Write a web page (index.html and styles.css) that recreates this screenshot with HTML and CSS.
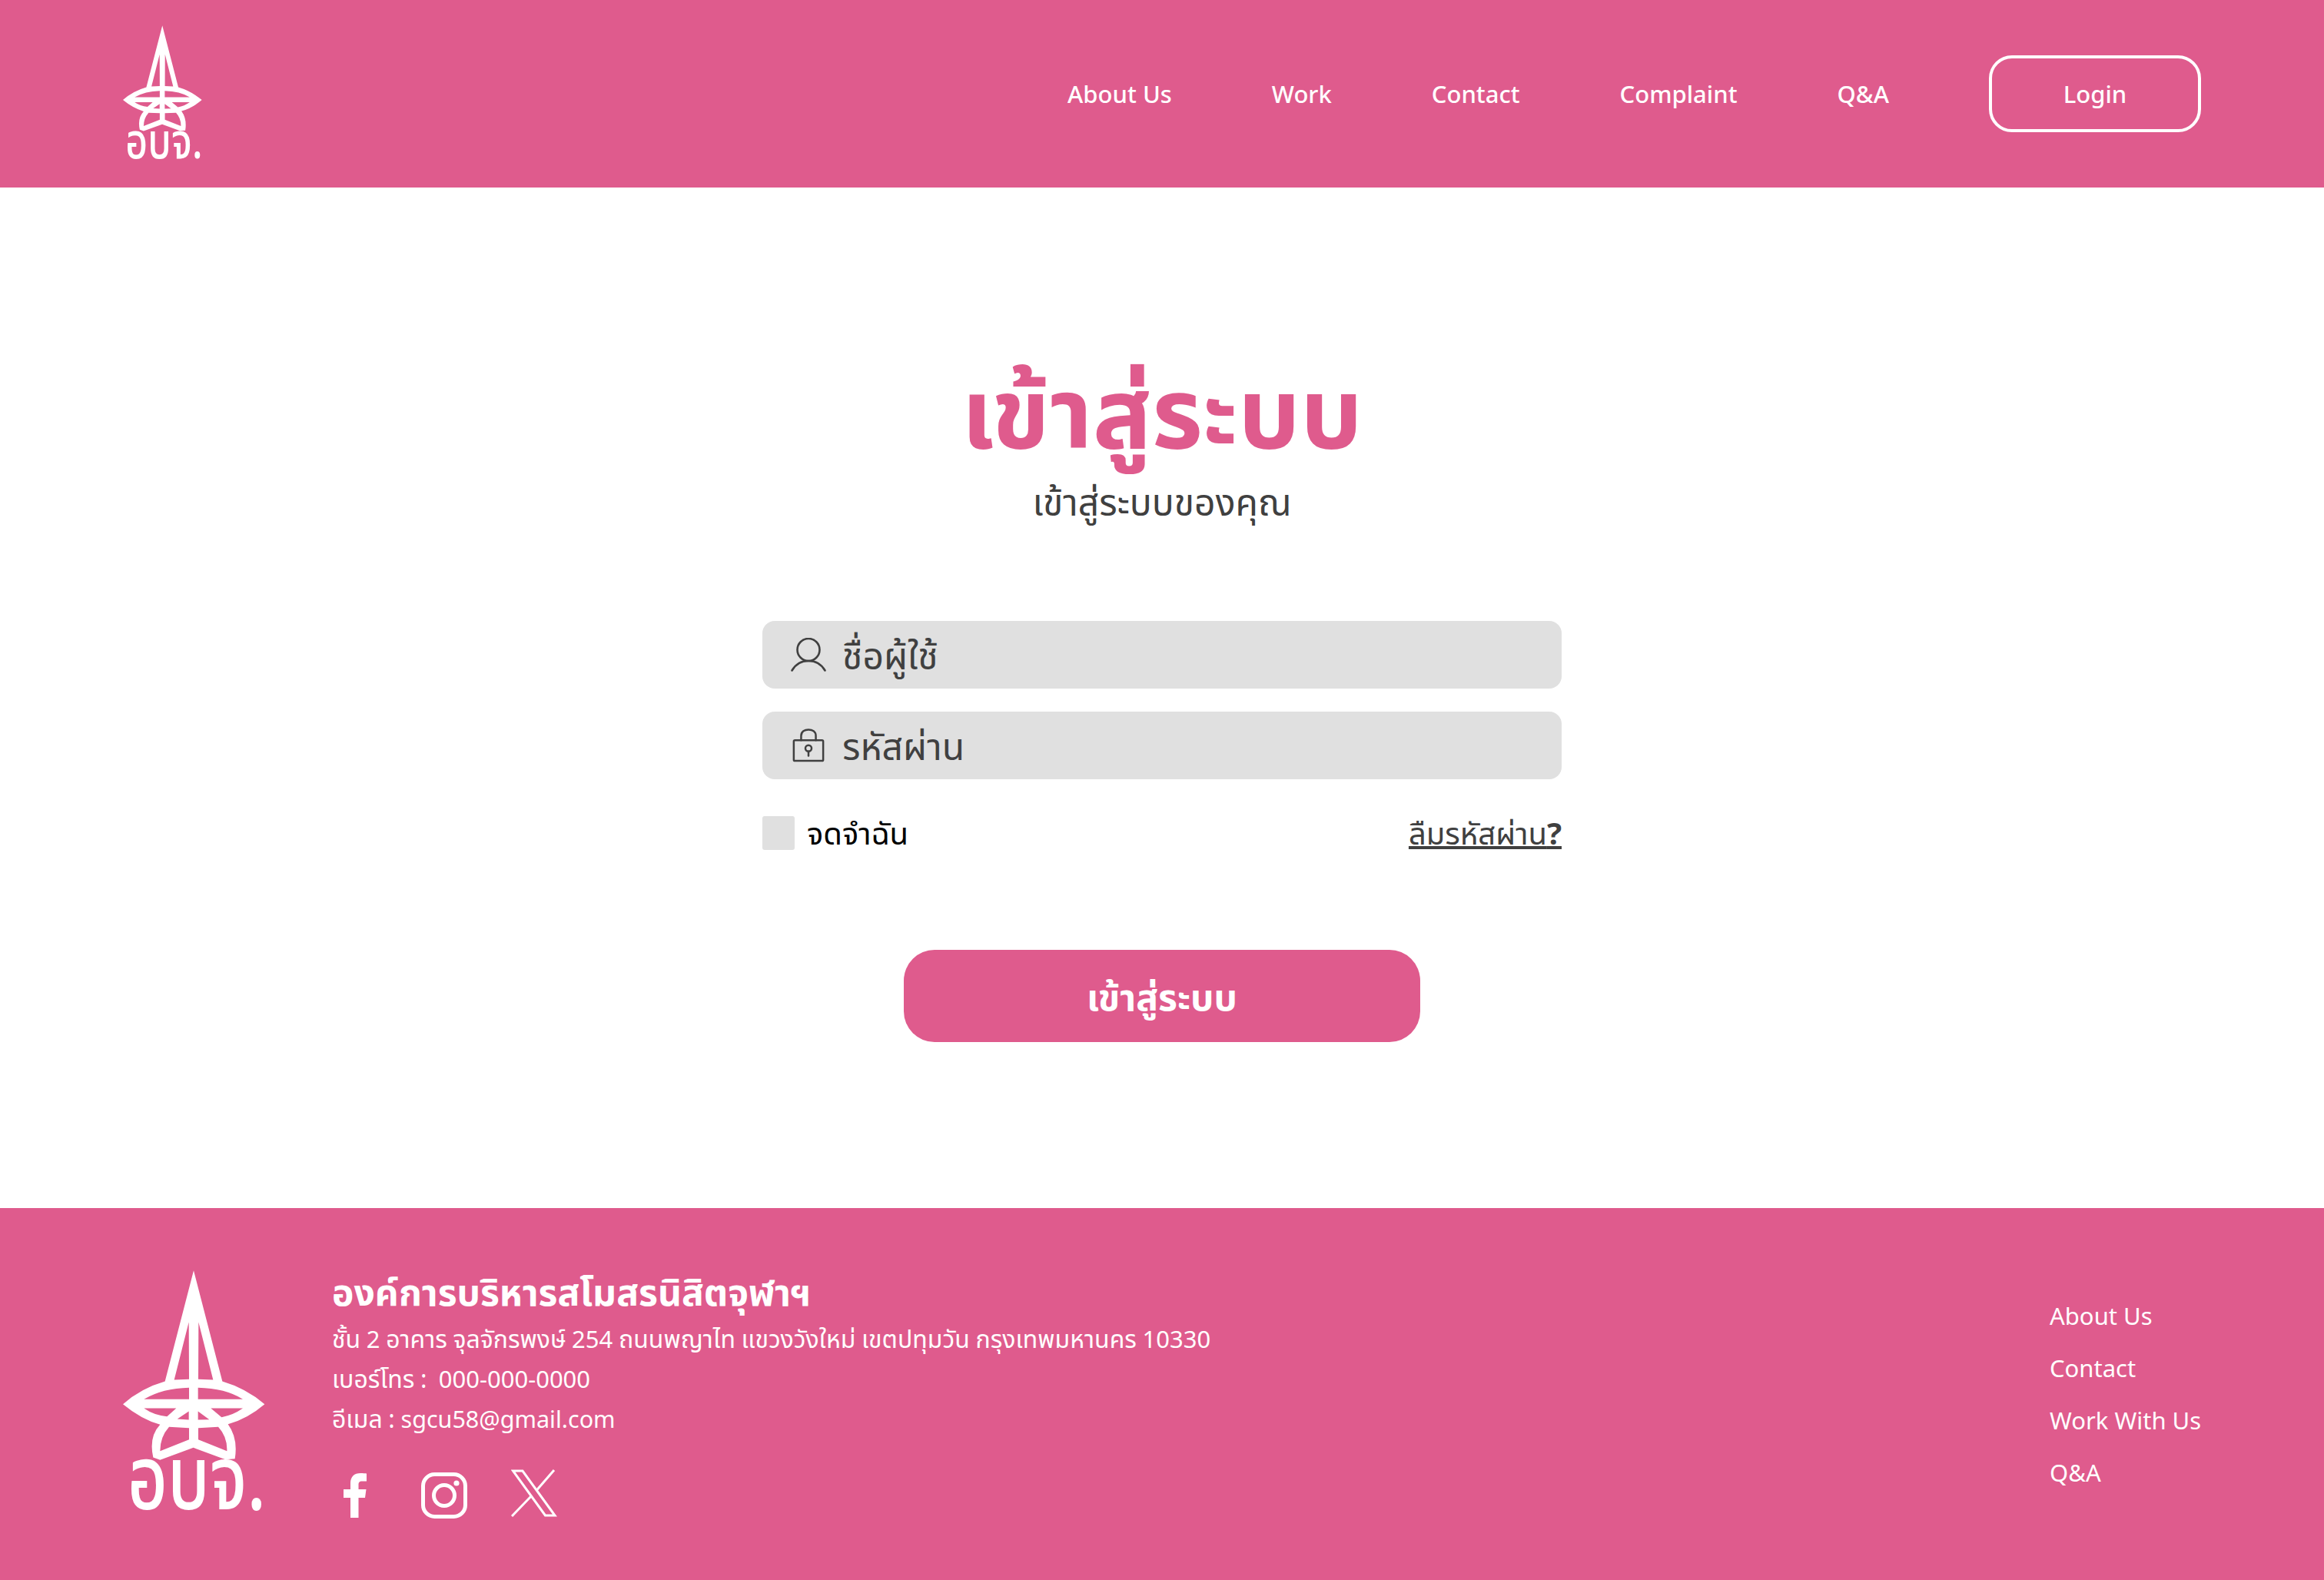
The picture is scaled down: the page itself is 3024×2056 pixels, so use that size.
FILE: index.html
```html
<!DOCTYPE html>
<html lang="th">
<head>
    <meta charset="UTF-8">
    <meta name="viewport" content="width=device-width, initial-scale=1.0">
    <title>เข้าสู่ระบบ</title>
    <link rel="stylesheet" href="styles.css">
</head>
<body>
    <svg class="defs" width="0" height="0">
        <defs>
            <path id="logoMark" fill="#fff" fill-rule="evenodd" d="M336 70 L448 503 Q540 530 613 592 Q545 650 470 670 Q510 725 497 805 L460 808 L335 762 L205 810 L178 800 Q160 720 205 672 Q130 650 60 592 Q130 530 224 503 Z M317 272 L318 495 L260 497 Z M355 272 L412 497 L354 495 Z M142 573 Q215 530 318 528 L318 573 Z M353 528 Q460 530 528 573 L353 573 Z M142 608 L268 608 L232 640 Q180 635 142 608 Z M528 608 Q490 635 445 643 L403 608 Z M317 620 L317 653 L272 650 Z M353 620 L397 652 L353 653 Z M240 681 L318 685 L318 730 L205 775 Q205 720 240 681 Z M432 681 L354 685 L354 730 L466 775 Q468 720 432 681 Z"/>
        </defs>
    </svg>

    <!-- Header -->
    <header class="topbar">
        <svg class="logo-small" viewBox="60 70 555 935">
            <use href="#logoMark"/>
            <text class="logo-text" x="78" y="1003" textLength="540" lengthAdjust="spacingAndGlyphs">อบจ.</text>
        </svg>
        <nav class="topnav">
            <a href="#">About Us</a>
            <a href="#">Work</a>
            <a href="#">Contact</a>
            <a href="#">Complaint</a>
            <a href="#">Q&amp;A</a>
            <a href="#" class="login-btn">Login</a>
        </nav>
    </header>

    <!-- Login form -->
    <main class="login">
        <h1>เข้าสู่ระบบ</h1>
        <p class="subtitle">เข้าสู่ระบบของคุณ</p>
        <form class="login-form">
            <label class="field">
                <svg class="field-icon" viewBox="0 0 46 44" fill="none" stroke="#404040" stroke-width="2.6" stroke-linecap="round"><circle cx="23" cy="15.500" r="14.500"/><path d="M1.500 42.500 C7 33 14 30 23 30 C32 30 39 33 44.500 42.500"/></svg>
                <input type="text" placeholder="ชื่อผู้ใช้">
            </label>
            <label class="field">
                <svg class="field-icon" viewBox="0 0 46 46" fill="none" stroke="#404040" stroke-width="2.6" stroke-linecap="round"><rect x="3" y="16" width="40" height="28" rx="1.500"/><path d="M13 16 V10 C13 4 18 1.500 23 1.500 C28 1.500 33 4 33 10 V16"/><circle cx="23" cy="27" r="4.200"/><path d="M23 31 V37"/></svg>
                <input type="password" placeholder="รหัสผ่าน">
            </label>
            <div class="form-row">
                <label class="remember"><span class="checkbox"></span>จดจำฉัน</label>
                <a href="#" class="forgot">ลืมรหัสผ่าน<b>?</b></a>
            </div>
            <button type="submit">เข้าสู่ระบบ</button>
        </form>
    </main>

    <!-- Footer -->
    <footer class="footer">
        <svg class="logo-big" viewBox="60 70 555 935">
            <use href="#logoMark"/>
            <text class="logo-text" x="78" y="1003" textLength="540" lengthAdjust="spacingAndGlyphs">อบจ.</text>
        </svg>
        <div class="footer-info">
            <h2>องค์การบริหารสโมสรนิสิตจุฬาฯ</h2>
            <p>ชั้น <span class="num">2</span> อาคาร จุลจักรพงษ์ <span class="num">254</span> ถนนพญาไท แขวงวังใหม่ เขตปทุมวัน กรุงเทพมหานคร <span class="num">10330</span></p>
            <p>เบอร์โทร :&nbsp; <span class="num">000-000-0000</span></p>
            <p>อีเมล : <span class="mail">sgcu58@gmail.com</span></p>
            <div class="social">
                <svg class="fb" viewBox="0 0 30 58"><path fill="#fff" d="M9 58 V32 H0 V21 H9 V13 C9 4.500 14 0 22 0 C25.500 0 28.500 .3 30 .5 V10.500 H24.500 C20 10.500 19.500 12.500 19.500 15.500 V21 H29.500 L28 32 H19.500 V58 Z"/></svg>
                <svg class="ig" viewBox="0 0 60 60" fill="none" stroke="#fff" stroke-width="5"><rect x="2.500" y="2.500" width="55" height="55" rx="15"/><circle cx="30" cy="30" r="13.500"/><circle cx="46" cy="14" r="3.600" fill="#fff" stroke="none"/></svg>
                <svg class="xicon" viewBox="0 0 60 62" fill="none" stroke="#fff" stroke-width="3"><path d="M2.500 2 H15 L57 60 H44.500 Z"/><path d="M56 1 L33 27.500 M27 34 L1 61"/></svg>
            </div>
        </div>
        <ul class="footer-links">
            <li><a href="#">About Us</a></li>
            <li><a href="#">Contact</a></li>
            <li><a href="#">Work With Us</a></li>
            <li><a href="#">Q&amp;A</a></li>
        </ul>
    </footer>
</body>
</html>
```

FILE: styles.css
```css
* {
    box-sizing: border-box;
}

body {
    font-family: "Noto Sans", "Noto Sans Thai", sans-serif;
    background-color: white;
    color: #404040;
    display: flex;
    flex-direction: column;
    min-height: 100vh;
    margin: 0;
}

a {
    color: inherit;
    text-decoration: none;
}

.defs {
    position: absolute;
}

.logo-text {
    font-family: "Noto Sans", "Noto Sans Thai", sans-serif;
    font-size: 350px;
    font-weight: 500;
    fill: white;
}

/* Header */
.topbar {
    background-color: #df5b8d;
    height: 244px;
    padding: 33px 160px 0;
    display: flex;
    justify-content: space-between;
    align-items: flex-start;
    flex-shrink: 0;
}

.logo-small {
    width: 103px;
    height: 174px;
    overflow: visible;
}

.topnav {
    display: flex;
    align-items: center;
    gap: 130px;
    margin-top: 39px;
    color: white;
    font-size: 31px;
    font-weight: 500;
}

.login-btn {
    width: 276px;
    height: 100px;
    border: 4px solid white;
    border-radius: 30px;
    display: flex;
    justify-content: center;
    align-items: center;
}

/* Login form */
.login {
    flex: 1;
    display: flex;
    flex-direction: column;
    align-items: center;
    padding-top: 203px;
}

h1 {
    margin: 0;
    color: #df5b8d;
    font-size: 128px;
    font-weight: 700;
    line-height: 174px;
}

.subtitle {
    margin: 0 0 123px;
    font-size: 48px;
    line-height: 64px;
}

.login-form {
    width: 1040px;
    display: flex;
    flex-direction: column;
    gap: 30px;
}

.field {
    height: 88px;
    background-color: #e0e0e0;
    border-radius: 16px;
    display: flex;
    align-items: center;
    gap: 19px;
    padding-left: 37px;
}

.field-icon {
    width: 46px;
    height: 44px;
    flex-shrink: 0;
}

input {
    flex: 1;
    border: none;
    outline: none;
    background: none;
    font: inherit;
    font-size: 48px;
    color: #404040;
}

input::placeholder {
    color: #404040;
    opacity: 1;
}

.form-row {
    display: flex;
    justify-content: space-between;
    align-items: center;
    margin-top: 12px;
    font-size: 40px;
}

.remember {
    display: flex;
    align-items: center;
    gap: 16px;
    color: black;
}

.checkbox {
    width: 42px;
    height: 44px;
    margin-bottom: 5px;
    background-color: #e0e0e0;
    border-radius: 3px;
}

.forgot {
    text-decoration: underline;
}

button {
    align-self: center;
    width: 672px;
    height: 120px;
    margin-top: 89px;
    padding-top: 10px;
    background-color: #df5b8d;
    color: white;
    border: none;
    border-radius: 40px;
    font: inherit;
    font-size: 48px;
    font-weight: 700;
    cursor: pointer;
}

/* Footer */
.footer {
    background-color: #df5b8d;
    height: 484px;
    flex-shrink: 0;
    padding: 81px 160px 0;
    display: flex;
    align-items: flex-start;
    color: white;
}

.logo-big {
    width: 185px;
    height: 312px;
    margin-right: 87px;
    overflow: visible;
}

.footer-info {
    flex: 1;
    margin-top: -8px;
}

.footer-info h2 {
    margin: 0;
    font-size: 48px;
    font-weight: 700;
    line-height: 71px;
}

.footer-info p {
    margin: 0;
    font-size: 32px;
    line-height: 52px;
    word-spacing: -0.7px;
}

.num {
    font-size: 31px;
}

.mail {
    font-size: 30.5px;
}

.social {
    display: flex;
    align-items: center;
    gap: 71px;
    margin-top: 40px;
    padding-left: 15px;
}

.fb {
    width: 30px;
    height: 58px;
}

.ig {
    width: 60px;
    height: 60px;
}

.xicon {
    width: 60px;
    height: 62px;
    margin-left: -14px;
    margin-bottom: 6px;
}

.footer-links {
    list-style: none;
    margin: 37px 0 0;
    padding: 0;
    width: 197px;
    display: flex;
    flex-direction: column;
    gap: 24px;
    font-size: 31px;
    line-height: 44px;
    white-space: nowrap;
}
```
